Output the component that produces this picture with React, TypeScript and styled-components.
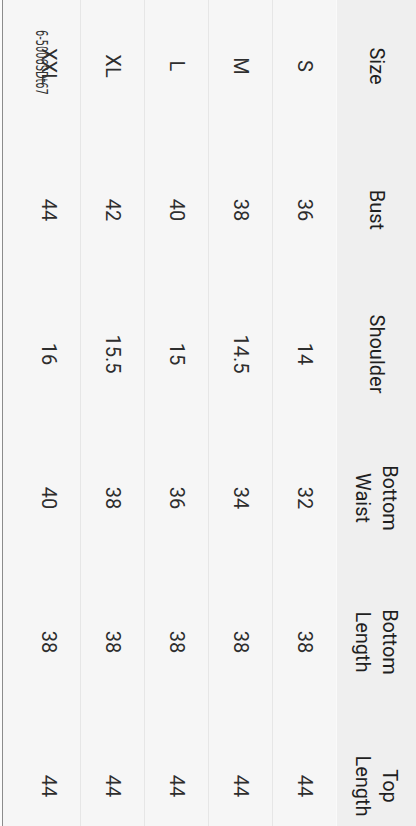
import React from "react";
import styled, { createGlobalStyle } from "styled-components";

const GlobalStyle = createGlobalStyle`
  html, body {
    margin: 0;
    padding: 0;
    background: #fbfbfb;
  }
  body {
    font-family: Roboto, "Liberation Sans", Arial, sans-serif;
  }
`;

// the chart is laid out in landscape and turned a quarter clockwise,
// as it is in the photographed page
const Screen = styled.div`
  width: 416px;
  height: 826px;
  overflow: hidden;
  position: relative;
`;

const Landscape = styled.div`
  width: 826px;
  height: 416px;
  transform-origin: top left;
  transform: rotate(90deg) translateY(-100%);
  display: flex;
  flex-direction: column;
  overflow: hidden;
  background: #fbfbfb;
`;

const Sheet = styled.div`
  flex: 1;
  display: flex;
  flex-direction: column;
  background: #f6f6f6;
  border-bottom: 1px solid #8c8c8c;
  margin-bottom: 2px;
`;

const Row = styled.div<{ $header?: boolean; $line?: string }>`
  display: grid;
  grid-template-columns: repeat(6, 144px);
  margin-left: -6px;
  height: ${(p) => (p.$header ? "79px" : "64px")};
  box-sizing: border-box;
  background: ${(p) => (p.$header ? "#efefef" : "#f6f6f6")};
  border-top: ${(p) => (p.$line ? `1px solid ${p.$line}` : "none")};
`;

const Cell = styled.div<{ $header?: boolean }>`
  position: relative;
  display: flex;
  align-items: center;
  justify-content: center;
  text-align: center;
  font-size: 20px;
  line-height: 27px;
  color: ${(p) => (p.$header ? "#1f1f1f" : "#2e2e2e")};
  white-space: pre-line;
`;

// printed code stamped over the last row
const Stamp = styled.span`
  position: absolute;
  left: 36px;
  top: 31px;
  display: inline-block;
  font-family: "DejaVu Sans Condensed", "Liberation Sans", sans-serif;
  font-size: 16px;
  line-height: 16px;
  color: #333;
  white-space: nowrap;
  transform-origin: left center;
  transform: scaleX(0.68);
`;

const Filler = styled.div`
  flex: 1;
`;

const headers = ["Size", "Bust", "Shoulder", "Bottom\nWaist", "Bottom\nLength", "Top\nLength"];

const rows = [
  ["S", "36", "14", "32", "38", "44"],
  ["M", "38", "14.5", "34", "38", "44"],
  ["L", "40", "15", "36", "38", "44"],
  ["XL", "42", "15.5", "38", "38", "44"],
  ["XXL", "44", "16", "40", "38", "44"],
];

export default function App() {
  return (
    <>
      <GlobalStyle />
      <Screen>
        <Landscape>
          <Sheet>
            <Row $header>
              {headers.map((h) => (
                <Cell key={h} $header>
                  {h}
                </Cell>
              ))}
            </Row>
            {rows.map((r, i) => (
              <Row key={r[0]} $line={i === 0 ? "#fafafa" : "#e6e6e6"}>
                {r.map((v, j) => (
                  <Cell key={j}>
                    {v}
                    {i === rows.length - 1 && j === 0 && <Stamp>6-5006SDt67</Stamp>}
                  </Cell>
                ))}
              </Row>
            ))}
            <Filler />
          </Sheet>
        </Landscape>
      </Screen>
    </>
  );
}
